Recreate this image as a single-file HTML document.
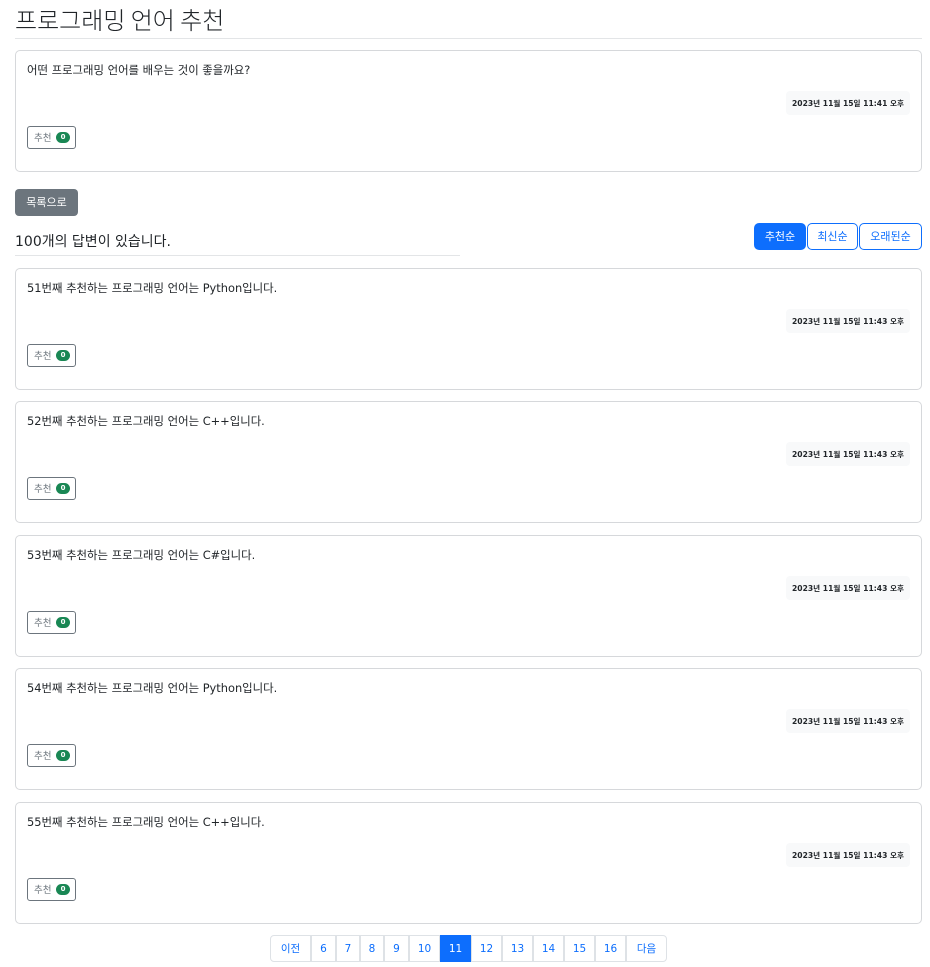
<!DOCTYPE html>
<html><head><meta charset="utf-8"><style>
*{box-sizing:border-box;margin:0;padding:0}
body{width:930px;height:967px;background:#fff;font-family:"DejaVu Sans","Noto Sans CJK KR",sans-serif;color:#212529;position:relative;overflow:hidden}
.a{position:absolute}
.card{position:absolute;left:15px;width:907px;height:122px;border:1px solid #d6d8db;border-radius:5px}
.card .t{position:absolute;left:11px;top:12px;font-size:11.4px;line-height:15px}
.card .d{position:absolute;left:770px;top:40px;width:124px;height:24px;background:#f8f9fa;border-radius:4px;font-size:7.6px;font-weight:bold;line-height:26px;text-align:center}
.card .r{position:absolute;left:11px;top:75px;width:49px;height:23px;border:1px solid #6c757d;border-radius:3px;font-size:9.5px;color:#6c757d;line-height:23px;padding-left:6px}
.card .r b{position:absolute;left:28px;top:5px;width:14px;height:11px;border-radius:6px;background:#198754;color:#fff;font-size:7px;line-height:11px;text-align:center}
.sb{position:absolute;top:223px;height:27px;border:1px solid #0d6efd;border-radius:5px;color:#0d6efd;font-size:11px;line-height:26px;text-align:center}
.pg{position:absolute;top:935px;height:27px;border:1px solid #dee2e6;margin-left:-1px;color:#0d6efd;font-size:10.5px;line-height:26px;text-align:center}
</style></head><body>
<div class="a" style="left:15px;top:4px;font-size:24px;line-height:30px;font-family:'Noto Sans CJK KR',sans-serif;font-weight:300">프로그래밍 언어 추천</div>
<div class="a" style="left:15px;top:38px;width:907px;height:1px;background:#e3e5e7"></div>

<div class="card" style="top:50px"><div class="t">어떤 프로그래밍 언어를 배우는 것이 좋을까요?</div><div class="d">2023년 11월 15일 11:41 오후</div><div class="r">추천<b>0</b></div></div>

<div class="a" style="left:15px;top:189px;width:63px;height:27px;background:#6c757d;border-radius:4px;color:#fff;font-size:11px;line-height:27px;text-align:center">목록으로</div>
<div class="a" style="left:15px;top:233px;font-size:14px;line-height:18px">100개의 답변이 있습니다.</div>
<div class="a" style="left:15px;top:255px;width:445px;height:1px;background:#e3e5e7"></div>
<div class="sb" style="left:754px;width:52px;background:#0d6efd;color:#fff">추천순</div>
<div class="sb" style="left:807px;width:51px">최신순</div>
<div class="sb" style="left:859px;width:63px">오래된순</div>

<div class="card" style="top:268px"><div class="t">51번째 추천하는 프로그래밍 언어는 Python입니다.</div><div class="d">2023년 11월 15일 11:43 오후</div><div class="r">추천<b>0</b></div></div>
<div class="card" style="top:401px"><div class="t">52번째 추천하는 프로그래밍 언어는 C++입니다.</div><div class="d">2023년 11월 15일 11:43 오후</div><div class="r">추천<b>0</b></div></div>
<div class="card" style="top:535px"><div class="t">53번째 추천하는 프로그래밍 언어는 C#입니다.</div><div class="d">2023년 11월 15일 11:43 오후</div><div class="r">추천<b>0</b></div></div>
<div class="card" style="top:668px"><div class="t">54번째 추천하는 프로그래밍 언어는 Python입니다.</div><div class="d">2023년 11월 15일 11:43 오후</div><div class="r">추천<b>0</b></div></div>
<div class="card" style="top:802px"><div class="t">55번째 추천하는 프로그래밍 언어는 C++입니다.</div><div class="d">2023년 11월 15일 11:43 오후</div><div class="r">추천<b>0</b></div></div>

<div class="pg" style="left:271px;width:41px;border-radius:4px 0 0 4px">이전</div>
<div class="pg" style="left:312px;width:25px">6</div>
<div class="pg" style="left:337px;width:24px">7</div>
<div class="pg" style="left:361px;width:24px">8</div>
<div class="pg" style="left:385px;width:25px">9</div>
<div class="pg" style="left:410px;width:31px">10</div>
<div class="pg" style="left:441px;width:31px;background:#0d6efd;border-color:#0d6efd;color:#fff">11</div>
<div class="pg" style="left:472px;width:31px">12</div>
<div class="pg" style="left:503px;width:31px">13</div>
<div class="pg" style="left:534px;width:31px">14</div>
<div class="pg" style="left:565px;width:31px">15</div>
<div class="pg" style="left:596px;width:31px">16</div>
<div class="pg" style="left:627px;width:41px;border-radius:0 4px 4px 0">다음</div>
</body></html>
